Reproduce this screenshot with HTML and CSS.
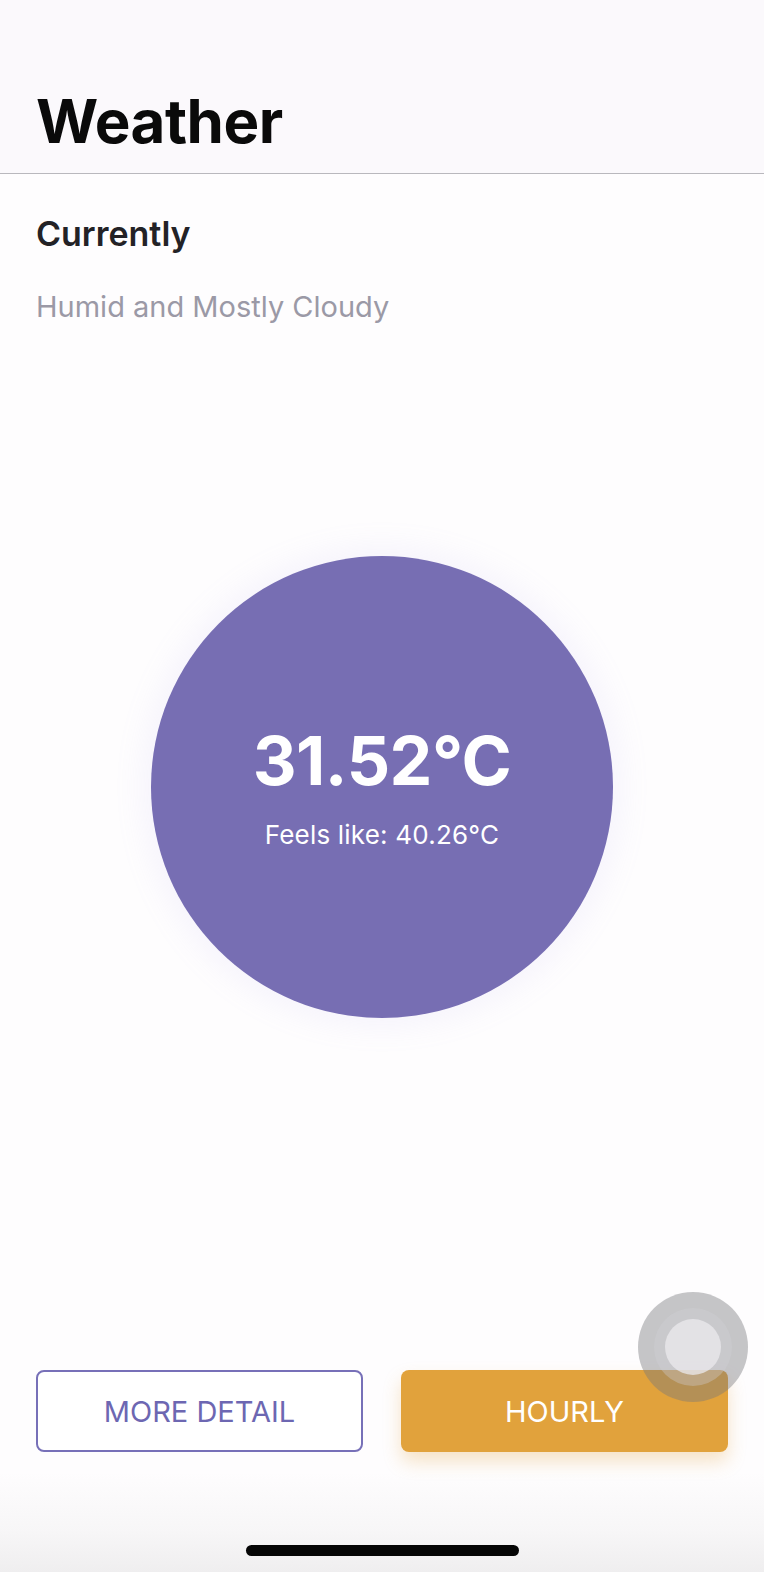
FILE: index.html
```html
<!DOCTYPE html>
<html>
<head>
<meta charset="utf-8">
<link rel="stylesheet" href="styles.css">
</head>
<body>
<div class="screen">
  <header class="nav">
    <h1 class="title">Weather</h1>
  </header>
  <main class="content">
    <h2 class="section">Currently</h2>
    <p class="summary">Humid and Mostly Cloudy</p>
    <div class="circle-wrap">
      <div class="circle">
        <div class="temp">31.52°C</div>
        <div class="feels">Feels like: 40.26°C</div>
      </div>
    </div>
    <div class="actions">
      <button class="btn btn-outline">MORE DETAIL</button>
      <button class="btn btn-fill">HOURLY</button>
      <div class="touch"><div class="touch-ring"><div class="touch-core"></div></div></div>
    </div>
  </main>
  <footer class="home">
    <div class="home-bar"></div>
  </footer>
</div>
</body>
</html>
```
FILE: styles.css
```css
* { box-sizing: border-box; }
html, body { margin: 0; padding: 0; }
body {
  width: 764px;
  height: 1572px;
  overflow: hidden;
  background: #fefdfe;
  font-family: Inter, "Noto Sans", "Liberation Sans", sans-serif;
}
.screen {
  height: 1572px;
  display: flex;
  flex-direction: column;
}
.nav {
  height: 174px;
  background: #fbf9fc;
  border-bottom: 1.5px solid #b9b8bd;
  padding: 0 36px;
  display: flex;
  align-items: flex-end;
}
.title {
  margin: 0 0 22px 0;
  font-size: 60px;
  font-weight: 700;
  letter-spacing: -0.5px;
  color: #0a0a0a;
  line-height: 1;
}
.content {
  flex: 1;
  display: flex;
  flex-direction: column;
  padding: 0 36px;
}
.section {
  margin: 40px 0 0 0;
  font-size: 34px;
  font-weight: 600;
  color: #232226;
  line-height: 40px;
}
.summary {
  margin: 35px 0 0 0;
  font-size: 29px;
  font-weight: 400;
  color: #9b99a6;
  line-height: 36px;
}
.circle-wrap {
  display: flex;
  justify-content: center;
  margin-top: 231px;
}
.circle {
  width: 462px;
  height: 462px;
  border-radius: 50%;
  background: #776eb3;
  box-shadow: 0 0 28px 10px rgba(180, 170, 240, 0.10);
  display: flex;
  flex-direction: column;
  align-items: center;
  justify-content: center;
  color: #fff;
}
.temp {
  font-size: 68px;
  font-weight: 700;
  line-height: 1;
  letter-spacing: -0.5px;
}
.feels {
  margin-top: 28px;
  font-size: 26px;
  font-weight: 400;
  line-height: 1;
  letter-spacing: 0.2px;
}
.actions {
  margin-top: auto;
  margin-bottom: 120px;
  display: grid;
  grid-template-columns: 1fr 1fr;
  column-gap: 38px;
  position: relative;
}
.btn {
  height: 82px;
  border-radius: 8px;
  font-family: inherit;
  font-size: 29px;
  font-weight: 400;
  letter-spacing: 0;
}
.btn-outline {
  background: #ffffff;
  border: 2px solid #7770b8;
  color: #6d67b2;
}
.btn-fill {
  background: #e1a23c;
  border: none;
  color: #ffffff;
  box-shadow: 0 10px 18px rgba(225, 162, 60, 0.28);
}
.touch {
  position: absolute;
  right: -20px;
  top: -78px;
  width: 110px;
  height: 110px;
  border-radius: 50%;
  background: rgba(120, 118, 124, 0.42);
  display: flex;
  align-items: center;
  justify-content: center;
}
.touch-ring {
  width: 78px;
  height: 78px;
  border-radius: 50%;
  background: rgba(210, 208, 214, 0.35);
  display: flex;
  align-items: center;
  justify-content: center;
}
.touch-core {
  width: 56px;
  height: 56px;
  border-radius: 50%;
  background: rgba(235, 233, 238, 0.75);
}
.home {
  height: 100px;
  margin-top: -100px;
  background: linear-gradient(to bottom, rgba(254,253,254,0) 0%, #f7f6f7 60%, #efeeef 100%);
  display: flex;
  justify-content: center;
  align-items: flex-end;
  padding-bottom: 16px;
  pointer-events: none;
}
.home-bar {
  width: 273px;
  height: 11px;
  border-radius: 6px;
  background: #050505;
}
```
